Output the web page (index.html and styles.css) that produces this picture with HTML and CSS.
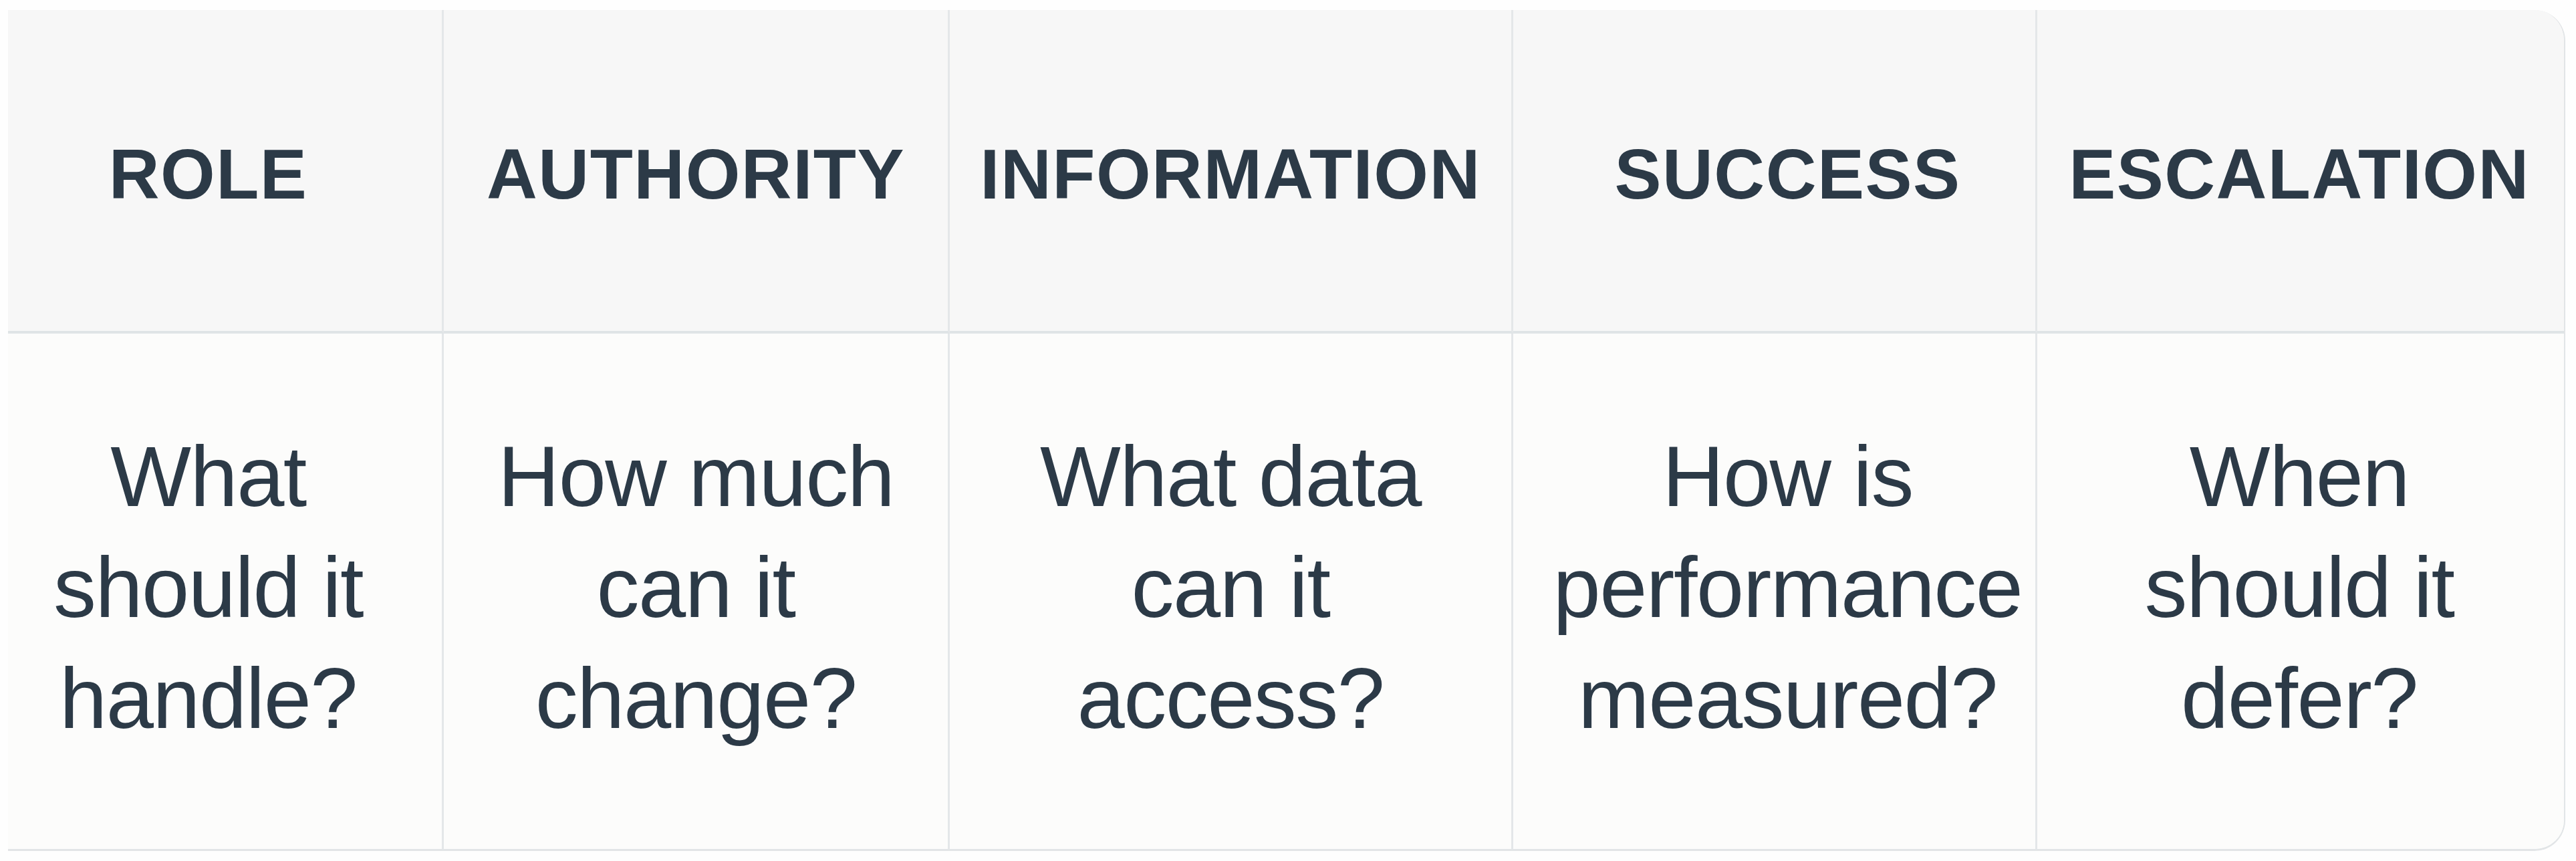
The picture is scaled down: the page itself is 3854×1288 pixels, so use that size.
FILE: index.html
```html
<!DOCTYPE html>
<html lang="en">
<head>
<meta charset="utf-8">
<title>Agent scope table</title>
<link rel="stylesheet" href="styles.css">
</head>
<body>
<div class="card">
  <div class="cell head first">ROLE</div>
  <div class="cell head">AUTHORITY</div>
  <div class="cell head">INFORMATION</div>
  <div class="cell head fourth">SUCCESS</div>
  <div class="cell head last">ESCALATION</div>
  <div class="cell body first">What<br>should it<br>handle?</div>
  <div class="cell body">How much<br>can it<br>change?</div>
  <div class="cell body">What data<br>can it<br>access?</div>
  <div class="cell body fourth">How is<br>performance<br>measured?</div>
  <div class="cell body last">When<br>should it<br>defer?</div>
</div>
</body>
</html>
```
FILE: styles.css
```css
html, body {
  margin: 0;
  padding: 0;
  background: #fefefe;
}
body {
  padding: 15px 16px 15px 12px;
  font-family: "Liberation Sans", Arial, sans-serif;
  color: #2c3a47;
}
.card {
  width: 3826px;
  height: 1258px;
  display: grid;
  grid-template-columns: 652px 757px 843px 784px 790px;
  grid-template-rows: 484px 774px;
  border-right: 2px solid #e2e5e7;
  border-bottom: 3px solid #e2e5e7;
  border-radius: 0 46px 46px 0;
  overflow: hidden;
  box-sizing: border-box;
}
.cell {
  display: flex;
  align-items: center;
  justify-content: center;
  text-align: center;
  border-right: 3px solid #e4e7e9;
  box-sizing: border-box;
}
.cell.first {
  padding-right: 50px;
}
.cell.fourth {
  padding-left: 40px;
}
.cell.last {
  border-right: none;
  padding-right: 6px;
}
.head {
  background: #f7f7f7;
  border-bottom: 4px solid #dfe4e6;
  font-weight: 700;
  font-size: 105px;
  letter-spacing: 1.5px;
  padding-top: 12px;
}
.body {
  background: #fcfcfb;
  font-size: 128px;
  line-height: 166px;
  letter-spacing: -1.5px;
  font-weight: 400;
  padding-bottom: 14px;
}
```
